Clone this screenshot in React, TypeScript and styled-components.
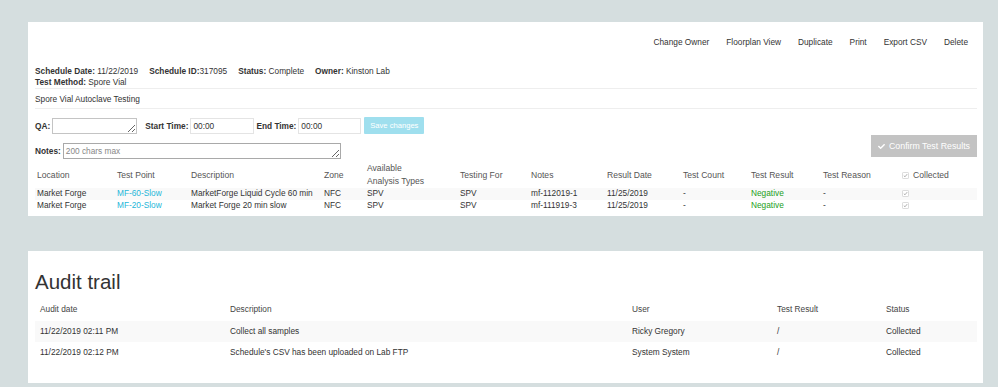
import React from 'react';
import styled, { createGlobalStyle } from 'styled-components';
import { FaCheck } from 'react-icons/fa';

const GlobalStyle = createGlobalStyle`
  html, body { margin: 0; padding: 0; background: #d5dedf; }
  body {
    font-family: "Liberation Sans", Arial, Helvetica, sans-serif;
    color: #333;
    font-size: 8.3px;
  }
  * { box-sizing: border-box; }
`;

const Page = styled.div`
  padding: 22px 0 4px 28px;
  display: flex;
  flex-direction: column;
  gap: 35px;
`;

const Card = styled.section<{ $height: number }>`
  width: 955px;
  height: ${p => p.$height}px;
  background: #fff;
  padding: 0 6px 0 7px;
  display: flex;
  flex-direction: column;
`;

const Actions = styled.nav`
  display: flex;
  justify-content: flex-end;
  padding-top: 15px;
  line-height: 11px;
`;

const ActionLink = styled.a`
  padding: 0 9px 0 8px;
  color: #333;
  text-decoration: none;
  cursor: pointer;
`;

const Info = styled.div`
  margin-top: 18px;
  line-height: 11px;
  border-bottom: 1px solid #eee;
`;

const InfoLine = styled.div`
  display: flex;
`;

const InfoItem = styled.span`
  margin-right: 11px;
`;

const Strong = styled.b`
  font-weight: bold;
`;

const Description = styled.div`
  padding: 5px 0 3px;
  line-height: 11px;
  border-bottom: 1px solid #eee;
`;

const FormArea = styled.div`
  margin-top: 8px;
  display: flex;
  justify-content: space-between;
  align-items: flex-end;
`;

const FormCol = styled.div`
  display: flex;
  flex-direction: column;
  gap: 8px;
`;

const FormRow = styled.div`
  display: flex;
  align-items: center;
  height: 17px;
`;

const Field = styled.label<{ $gap?: number }>`
  display: flex;
  align-items: center;
  margin-left: ${p => p.$gap ?? 0}px;
`;

const FieldLabel = styled.span`
  font-weight: bold;
  margin-right: 2px;
`;

const TextArea = styled.textarea<{ $w: number; $dark?: boolean }>`
  display: block;
  width: ${p => p.$w}px;
  height: 16px;
  margin: 0;
  padding: 1px 2px;
  font-family: inherit;
  font-size: 8.3px;
  line-height: 12px;
  color: #333;
  border: 1px solid ${p => (p.$dark ? '#a9a9a9' : '#c4c4c4')};
  border-radius: 0;
  resize: both;
  overflow: hidden;
  &::placeholder { color: #888; }
`;

const TimeInput = styled.input<{ $w: number }>`
  display: block;
  width: ${p => p.$w}px;
  height: 16px;
  margin: 0;
  padding: 0 2px;
  font-family: inherit;
  font-size: 8.3px;
  color: #333;
  border: 1px solid #e4e4e4;
  border-radius: 0;
  outline: none;
`;

const SaveButton = styled.button`
  margin-left: 3px;
  width: 60px;
  height: 17px;
  padding: 0;
  border: none;
  border-radius: 1px;
  background: #9fdfee;
  color: #fff;
  font-family: inherit;
  font-size: 7.6px;
`;

const ConfirmButton = styled.button`
  width: 106px;
  height: 22px;
  margin-bottom: 2px;
  padding: 0;
  border: none;
  background: #c3c3c3;
  color: #fff;
  font-family: inherit;
  font-size: 8.8px;
  display: flex;
  align-items: center;
  justify-content: center;
  gap: 4px;
`;

const DataTable = styled.table`
  width: 942px;
  margin-top: 3px;
  border-collapse: collapse;
  table-layout: fixed;
`;

const DTh = styled.th`
  text-align: left;
  font-weight: normal;
  font-size: 8.6px;
  color: #555;
  line-height: 13px;
  padding: 0 2px;
  vertical-align: middle;
  white-space: nowrap;
`;

const Row = styled.tr<{ $striped?: boolean }>`
  background: ${p => (p.$striped ? '#f9f9f9' : 'transparent')};
`;

const DTd = styled.td`
  padding: 0 2px;
  line-height: 11.5px;
  white-space: nowrap;
  overflow: hidden;
`;

const PointLink = styled.a`
  color: #25b6d8;
  text-decoration: none;
`;

const Negative = styled.span`
  color: #22a022;
`;

const CheckBox = styled.svg`
  width: 7px;
  height: 7px;
  vertical-align: -1px;
  margin-right: 4px;
`;

const AuditHeading = styled.h2`
  margin: 19px 0 0;
  font-size: 20.5px;
  line-height: 24px;
  font-weight: normal;
  color: #333;
`;

const AuditTable = styled.table`
  width: 942px;
  margin-top: 4px;
  border-collapse: collapse;
  table-layout: fixed;
`;

const ATh = styled.th`
  text-align: left;
  font-weight: normal;
  color: #444;
  padding: 0 5px;
  line-height: 23px;
`;

const ATd = styled.td`
  padding: 0 5px;
  line-height: 21px;
  white-space: nowrap;
`;

const Tick = () => (
  <CheckBox viewBox="0 0 14 14">
    <rect x="0.75" y="0.75" width="12.5" height="12.5" rx="2.5" fill="#fff" stroke="#c9c9c9" strokeWidth="1.5" />
    <path d="M3.6 7.3 L6 9.6 L10.4 4.2" fill="none" stroke="#9c9c9c" strokeWidth="1.6" />
  </CheckBox>
);

const dataCols = [80, 74, 133, 43, 93, 71, 76, 76, 68, 72, 79, 77];
const auditCols = [190, 402, 145, 109, 96];

const samples = [
  { loc: 'Market Forge', point: 'MF-60-Slow', desc: 'MarketForge Liquid Cycle 60 min', zone: 'NFC', types: 'SPV', testing: 'SPV', notes: 'mf-112019-1', date: '11/25/2019' },
  { loc: 'Market Forge', point: 'MF-20-Slow', desc: 'Market Forge 20 min slow', zone: 'NFC', types: 'SPV', testing: 'SPV', notes: 'mf-111919-3', date: '11/25/2019' },
];

const audits = [
  { date: '11/22/2019 02:11 PM', desc: 'Collect all samples', user: 'Ricky Gregory', result: '/', status: 'Collected' },
  { date: '11/22/2019 02:12 PM', desc: "Schedule's CSV has been uploaded on Lab FTP", user: 'System System', result: '/', status: 'Collected' },
];

export default function App() {
  return (
    <>
      <GlobalStyle />
      <Page>
        <Card $height={194}>
          <Actions>
            {['Change Owner', 'Floorplan View', 'Duplicate', 'Print', 'Export CSV', 'Delete'].map(a => (
              <ActionLink key={a}>{a}</ActionLink>
            ))}
          </Actions>
          <Info>
            <InfoLine>
              <InfoItem><Strong>Schedule Date:</Strong> 11/22/2019</InfoItem>
              <InfoItem><Strong>Schedule ID:</Strong>317095</InfoItem>
              <InfoItem><Strong>Status:</Strong> Complete</InfoItem>
              <InfoItem><Strong>Owner:</Strong> Kinston Lab</InfoItem>
            </InfoLine>
            <InfoLine>
              <InfoItem><Strong>Test Method:</Strong> Spore Vial</InfoItem>
            </InfoLine>
          </Info>
          <Description>Spore Vial Autoclave Testing</Description>
          <FormArea>
            <FormCol>
              <FormRow>
                <Field>
                  <FieldLabel>QA:</FieldLabel>
                  <TextArea $w={85} />
                </Field>
                <Field $gap={8}>
                  <FieldLabel>Start Time:</FieldLabel>
                  <TimeInput $w={64} defaultValue="00:00" />
                </Field>
                <Field $gap={2}>
                  <FieldLabel>End Time:</FieldLabel>
                  <TimeInput $w={63} defaultValue="00:00" />
                </Field>
                <SaveButton>Save changes</SaveButton>
              </FormRow>
              <FormRow>
                <Field>
                  <FieldLabel>Notes:</FieldLabel>
                  <TextArea $w={278} $dark placeholder="200 chars max" />
                </Field>
              </FormRow>
            </FormCol>
            <ConfirmButton>
              <FaCheck size={7} />
              Confirm Test Results
            </ConfirmButton>
          </FormArea>
          <DataTable>
            <colgroup>
              {dataCols.map((w, i) => <col key={i} style={{ width: w }} />)}
            </colgroup>
            <thead>
              <tr>
                <DTh>Location</DTh>
                <DTh>Test Point</DTh>
                <DTh>Description</DTh>
                <DTh>Zone</DTh>
                <DTh>Available<br />Analysis Types</DTh>
                <DTh>Testing For</DTh>
                <DTh>Notes</DTh>
                <DTh>Result Date</DTh>
                <DTh>Test Count</DTh>
                <DTh>Test Result</DTh>
                <DTh>Test Reason</DTh>
                <DTh><Tick />Collected</DTh>
              </tr>
            </thead>
            <tbody>
              {samples.map((s, i) => (
                <Row key={s.point} $striped={i % 2 === 0}>
                  <DTd>{s.loc}</DTd>
                  <DTd><PointLink>{s.point}</PointLink></DTd>
                  <DTd>{s.desc}</DTd>
                  <DTd>{s.zone}</DTd>
                  <DTd>{s.types}</DTd>
                  <DTd>{s.testing}</DTd>
                  <DTd>{s.notes}</DTd>
                  <DTd>{s.date}</DTd>
                  <DTd>-</DTd>
                  <DTd><Negative>Negative</Negative></DTd>
                  <DTd>-</DTd>
                  <DTd><Tick /></DTd>
                </Row>
              ))}
            </tbody>
          </DataTable>
        </Card>
        <Card $height={132}>
          <AuditHeading>Audit trail</AuditHeading>
          <AuditTable>
            <colgroup>
              {auditCols.map((w, i) => <col key={i} style={{ width: w }} />)}
            </colgroup>
            <thead>
              <tr>
                <ATh>Audit date</ATh>
                <ATh>Description</ATh>
                <ATh>User</ATh>
                <ATh>Test Result</ATh>
                <ATh>Status</ATh>
              </tr>
            </thead>
            <tbody>
              {audits.map((a, i) => (
                <Row key={a.date} $striped={i % 2 === 0}>
                  <ATd>{a.date}</ATd>
                  <ATd>{a.desc}</ATd>
                  <ATd>{a.user}</ATd>
                  <ATd>{a.result}</ATd>
                  <ATd>{a.status}</ATd>
                </Row>
              ))}
            </tbody>
          </AuditTable>
        </Card>
      </Page>
    </>
  );
}
